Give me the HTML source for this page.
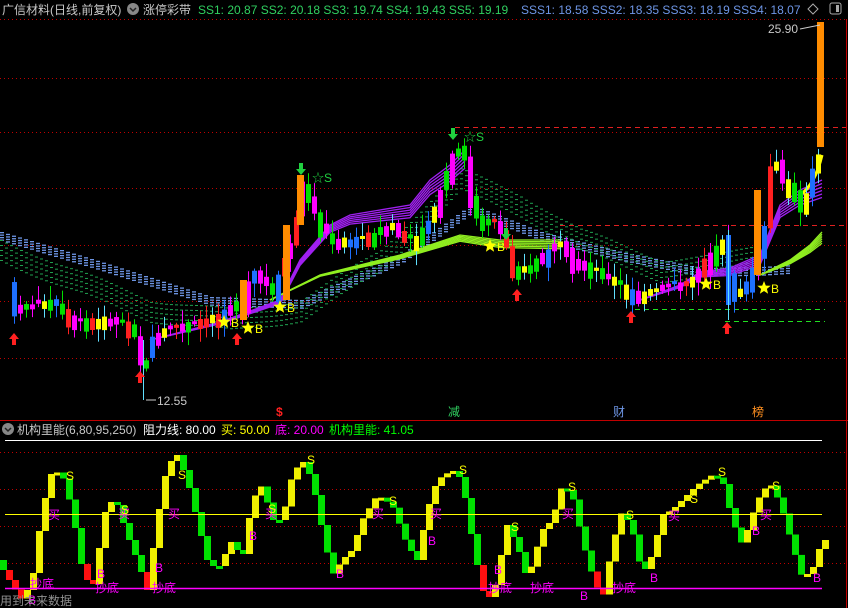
<!DOCTYPE html>
<html><head><meta charset="utf-8">
<style>
html,body{margin:0;padding:0;background:#000;width:848px;height:608px;overflow:hidden;font-family:"Liberation Sans","Noto Sans CJK SC",sans-serif;}
svg{position:absolute;left:0;top:0}
.t{font-family:"Liberation Sans","Noto Sans CJK SC",sans-serif;font-size:12px}
</style></head><body>
<svg id="s" width="848" height="608" xmlns="http://www.w3.org/2000/svg">
<rect width="848" height="608" fill="#000"/>
<g id="grid" stroke="#c00000" stroke-width="1" stroke-dasharray="1,3">
<line x1="0" y1="19.5" x2="846" y2="19.5"/>
<line x1="0" y1="78.5" x2="846" y2="78.5"/>
<line x1="0" y1="132.5" x2="846" y2="132.5"/>
<line x1="0" y1="188.5" x2="846" y2="188.5"/>
<line x1="0" y1="245.5" x2="846" y2="245.5"/>
<line x1="0" y1="301.5" x2="846" y2="301.5"/>
<line x1="0" y1="358.5" x2="846" y2="358.5"/>
<line x1="0" y1="452.5" x2="846" y2="452.5"/>
<line x1="0" y1="489.5" x2="846" y2="489.5"/>
<line x1="0" y1="526.5" x2="846" y2="526.5"/>
<line x1="0" y1="563.5" x2="846" y2="563.5"/>
</g>
<g stroke="#e02020" stroke-dasharray="5,4">
<line x1="455" y1="127.5" x2="846" y2="127.5"/>
<line x1="560" y1="225.5" x2="846" y2="225.5"/>
</g>
<g stroke="#20e020" stroke-dasharray="5,4">
<line x1="635" y1="309.5" x2="825" y2="309.5"/>
<line x1="725" y1="321.5" x2="825" y2="321.5"/>
</g>
<line x1="846.5" y1="19" x2="846.5" y2="608" stroke="#c00000"/>
<line x1="0" y1="420.5" x2="848" y2="420.5" stroke="#c00000"/>
<line x1="5" y1="440.5" x2="822" y2="440.5" stroke="#fff"/>
<g id="bands"></g>
<g id="candles"></g>
<g id="ind"></g>
<line x1="5" y1="514.5" x2="822" y2="514.5" stroke="#ffff00"/>
<line x1="5" y1="588.5" x2="822" y2="588.5" stroke="#ff00ff" stroke-width="1.5"/>
<g id="marks"></g>
<text class="t" x="2" y="14" fill="#c8c8c8" font-size="13">广信材料(日线,前复权)</text>
<circle cx="133" cy="9" r="6" fill="#888"/><path d="M130 8l3 3 3-3" stroke="#222" stroke-width="1.5" fill="none"/>
<text class="t" x="143" y="14" fill="#c8c8c8" font-size="13">涨停彩带</text>
<text class="t" x="198" y="14" fill="#30d060">SS1: 20.87  SS2: 20.18  SS3: 19.74  SS4: 19.43  SS5: 19.19</text>
<text class="t" x="521" y="14" fill="#6e96e6">SSS1: 18.58  SSS2: 18.35  SSS3: 18.19  SSS4: 18.07</text>
<path d="M813 4l5 5-5 5-5-5z" stroke="#aaa" fill="none"/>
<rect x="830" y="3" width="11" height="11" rx="2" stroke="#aaa" fill="none"/><rect x="836" y="5" width="3" height="7" fill="#aaa"/>
<text class="t" x="768" y="33" fill="#c8c8c8">25.90</text>
<path d="M800 29l20-4" stroke="#ccc"/>
<text class="t" x="157" y="405" fill="#c8c8c8">12.55</text>
<path d="M146 400h10" stroke="#ccc"/>
<circle cx="8" cy="429" r="6" fill="#888"/><path d="M5 428l3 3 3-3" stroke="#222" stroke-width="1.5" fill="none"/>
<text class="t" x="17" y="434" fill="#c8c8c8">机构里能(6,80,95,250)</text>
<text class="t" x="143" y="434" fill="#fff">阻力线: 80.00</text>
<text class="t" x="221" y="434" fill="#ffff00">买: 50.00</text>
<text class="t" x="275" y="434" fill="#ff00ff">底: 20.00</text>
<text class="t" x="329" y="434" fill="#00ff00">机构里能: 41.05</text>
<text class="t" x="276" y="416" fill="#ff2020" font-weight="bold">$</text>
<text class="t" x="448" y="416" fill="#30d060">减</text>
<text class="t" x="613" y="416" fill="#6e96e6">财</text>
<text class="t" x="752" y="416" fill="#ff9020">榜</text>
<text class="t" x="0" y="605" fill="#909090">用到未来数据</text>
</svg>
<script>
(function(){
var NS="http://www.w3.org/2000/svg";
function el(p,t,a){var e=document.createElementNS(NS,t);for(var k in a)e.setAttribute(k,a[k]);document.getElementById(p).appendChild(e);return e;}
function interp(pts,x){for(var i=0;i<pts.length-1;i++){if(x>=pts[i][0]&&x<=pts[i+1][0]){var t=(x-pts[i][0])/(pts[i+1][0]-pts[i][0]);return pts[i][1]+t*(pts[i+1][1]-pts[i][1]);}}return pts[pts.length-1][1];}
var seed=7;function rnd(){seed=(seed*9301+49297)%233280;return seed/233280;}
var P=[[0,255],[12,310],[30,305],[50,300],[70,320],[90,320],[110,320],[130,330],[140,375],[150,340],[160,330],[180,325],[200,320],[220,315],[240,300],[250,270],[270,290],[290,240],[300,185],[310,210],[320,230],[330,240],[350,240],[370,235],[390,225],[400,235],[410,240],[420,230],[430,215],[440,185],[450,155],[460,145],[470,210],[480,225],[490,220],[500,235],[510,270],[520,270],[530,265],[540,255],[560,240],[570,260],[590,270],[610,280],[630,295],[650,290],[670,285],[690,280],[700,265],[710,250],[720,240],[730,300],[740,290],[750,270],[760,245],[770,150],[780,180],[790,190],[800,210],[810,170],[822,140]];
var B=[[0,232],[100,262],[210,297],[300,300],[400,255],[470,205],[540,232],[620,252],[700,268],[760,267],[790,265]];
var x,y,k;
for(x=0;x<790;x+=6){y=interp(B,x);for(k=0;k<4;k++)el("bands","rect",{x:x,y:y+k*2.5,width:4,height:1.3,fill:"#6e96e6"});}
var G=[[0,260],[60,285],[150,320],[230,330],[300,320],[380,270],[460,190],[520,215],[580,250],[660,280],[720,275],[760,265]];
for(x=0;x<760;x+=5){y=interp(G,x);for(k=0;k<5;k++)el("bands","rect",{x:x,y:y-k*5+Math.sin(x/20)*2,width:3,height:1,fill:"#20a050"});}
function band(pts,col,n,sp){for(var k=0;k<n;k++){var d="";pts.forEach(function(p,i){d+=(i?"L":"M")+p[0]+" "+(p[1]+k*sp*(i/pts.length));});el("bands","path",{d:d,stroke:col,fill:"none","stroke-width":1.3});}}
band([[150,340],[220,322],[280,300],[300,260],[330,225],[350,215],[380,210],[410,205],[430,180],[450,165],[465,150]],"#a020f0",6,4);
band([[640,300],[680,285],[700,272],[730,268],[760,255],[780,205],[800,190],[822,180]],"#a020f0",6,4);
band([[270,300],[320,275],[360,265],[400,255],[430,245],[460,235],[500,240],[560,240]],"#90ee20",6,2);
band([[760,275],[790,260],[810,245],[822,232]],"#90ee20",6,3);
el("bands","path",{d:"M800 195Q815 185 822 155",stroke:"#ffff00",fill:"none","stroke-width":3});
var cols=["#ff00ff","#ffff00","#00e000","#ff2020","#1e70ff","#ff00ff","#00e000","#ffff00"];
for(x=12;x<=818;x+=6){y=interp(P,x);var y0=interp(P,x-6);var h=Math.max(3,Math.abs(y-y0)+rnd()*14);var c=cols[Math.floor(rnd()*cols.length)];var cy=Math.min(y,y0)-rnd()*4;
el("candles","line",{x1:x+2.5,y1:cy-rnd()*12-2,x2:x+2.5,y2:cy+h+rnd()*12+2,stroke:c=="#ffff00"?"#60e0ff":c});
el("candles","rect",{x:x,y:cy,width:5,height:h,fill:c});}
el("candles","line",{x1:143.5,y1:340,x2:143.5,y2:400,stroke:"#60e0ff"});
[[243,280,40],[286,225,75],[300,175,50],[757,190,85],[820,22,125]].forEach(function(o){el("candles","rect",{x:o[0]-3,y:o[1],width:7,height:o[2],fill:"#ff8c00"});});
el("candles","rect",{x:726,y:235,width:5,height:70,fill:"#1e70ff"});
el("candles","line",{x1:728.5,y1:230,x2:728.5,y2:320,stroke:"#60e0ff"});
function arrow(x,y,c,up){el("marks","path",{d:up?"M"+x+" "+y+"l-5 6h3v6h4v-6h3z":"M"+x+" "+y+"l-5 -6h3v-6h4v6h3z",fill:c});}
[[14,333],[237,333],[517,289],[631,311],[727,322]].forEach(function(a){arrow(a[0],a[1],"#ff2020",true);});
arrow(140,371,"#ff2020",true);
arrow(301,175,"#20d040",false);arrow(453,140,"#20d040",false);arrow(506,240,"#20d040",false);
function star(x,y){var d="";for(var i=0;i<10;i++){var r=i%2?3:7,a=-Math.PI/2+i*Math.PI/5;d+=(i?"L":"M")+(x+r*Math.cos(a)).toFixed(1)+" "+(y+r*Math.sin(a)).toFixed(1);}el("marks","path",{d:d+"Z",fill:"#ffff00"});}
[[224,322,"B"],[248,328,"B"],[280,307,"B"],[490,246,"B"],[706,284,"B"],[764,288,"B"]].forEach(function(s){star(s[0],s[1]);var t=el("marks","text",{x:s[0]+7,y:s[1]+5,fill:"#ffff00","font-size":"12",class:"t"});t.textContent=s[2];});
[[312,177],[464,136]].forEach(function(s){var t=el("marks","text",{x:s[0],y:s[1]+5,fill:"#20d040","font-size":"12",class:"t"});t.textContent="☆S";});
var I=[[0,560],[15,585],[25,600],[35,580],[45,510],[55,470],[65,475],[75,510],[85,570],[95,590],[100,560],[110,500],[120,505],[130,535],[140,560],[150,590],[160,520],[170,465],[180,455],[190,480],[200,520],[210,560],[220,570],[235,540],[245,560],[255,500],[265,485],[275,520],[285,520],[295,475],[305,460],[315,480],[325,530],[335,575],[345,560],[355,550],[365,520],[380,495],[395,505],[410,545],[420,560],[430,510],[440,480],[455,470],[465,480],[475,540],[485,590],[495,600],[510,525],[520,545],[530,580],[545,530],[555,520],[565,485],[575,495],[585,540],[595,575],[605,600],[615,545],[625,510],[635,530],[645,575],[655,555],[665,515],[675,510],[685,500],[700,485],[715,475],[725,480],[735,520],[745,545],[755,515],[765,490],[775,485],[785,510],[795,545],[805,578],[815,570],[825,540]];
var prev=interp(I,0);
for(x=0;x<826;x+=6){var v=interp(I,x+6);var up=v<prev;var cc=up?"#f0f000":"#00e000";if(!up&&v>575)cc="#ff1010";var y1=Math.min(v,prev),hh=Math.max(3,Math.abs(v-prev));
el("ind","rect",{x:x,y:y1,width:7,height:hh,fill:cc});prev=v;}
[[30,588,"抄底"],[95,592,"抄底"],[152,592,"抄底"],[488,592,"抄底"],[530,592,"抄底"],[612,592,"抄底"]].forEach(function(s){var t=el("marks","text",{x:s[0],y:s[1],fill:"#ff00ff","font-size":"13",class:"t"});t.textContent=s[2];});
[[48,519],[118,518],[168,518],[265,518],[372,518],[430,518],[562,518],[668,520],[760,519]].forEach(function(s){var t=el("marks","text",{x:s[0],y:s[1],fill:"#ff00ff","font-size":"12",class:"t"});t.textContent="买";});
[[66,480],[121,514],[178,479],[268,513],[307,464],[389,505],[459,474],[511,531],[568,491],[626,519],[690,503],[718,476],[772,490]].forEach(function(s){var t=el("marks","text",{x:s[0],y:s[1],fill:"#ffff00","font-size":"11",class:"t"});t.textContent="S";});
[[28,604],[97,578],[155,572],[249,540],[336,578],[428,545],[494,574],[580,600],[650,582],[752,535],[813,582]].forEach(function(s){var t=el("marks","text",{x:s[0],y:s[1],fill:"#ff00ff","font-size":"11",class:"t"});t.textContent="B";});
})();
</script>
</body></html>
